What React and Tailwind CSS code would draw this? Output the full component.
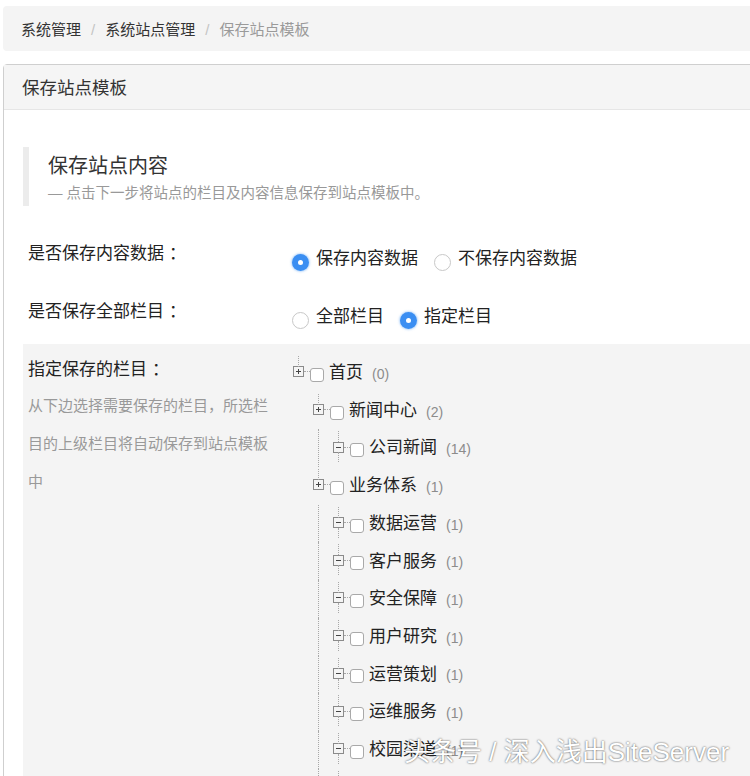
const FONT = "font-['Liberation_Sans','Noto_Sans_CJK_SC',sans-serif]";

const TREE = [
  { level: 0, name: "首页", count: 0, open: false },
  { level: 1, name: "新闻中心", count: 2, open: false },
  { level: 2, name: "公司新闻", count: 14, open: true },
  { level: 1, name: "业务体系", count: 1, open: false },
  { level: 2, name: "数据运营", count: 1, open: true },
  { level: 2, name: "客户服务", count: 1, open: true },
  { level: 2, name: "安全保障", count: 1, open: true },
  { level: 2, name: "用户研究", count: 1, open: true },
  { level: 2, name: "运营策划", count: 1, open: true },
  { level: 2, name: "运维服务", count: 1, open: true },
  { level: 2, name: "校园渠道", count: 1, open: true },
  { level: 2, name: "", count: null, open: true },
];

function Radio({ checked, label }) {
  return (
    <label className="flex items-center gap-[7px]">
      {checked ? (
        <span className="mt-[6px] flex h-[17px] w-[17px] items-center justify-center rounded-full bg-[#3a8ef2] shadow-[0_0_2px_1px_rgba(58,142,242,0.35)]">
          <span className="h-[5px] w-[5px] rounded-full bg-white" />
        </span>
      ) : (
        <span className="mt-[6px] h-[17px] w-[17px] rounded-full border border-[#c8c8c8] bg-white" />
      )}
      <span>{label}</span>
    </label>
  );
}

function ToggleIcon({ open }) {
  return (
    <span className="flex h-[11px] w-[11px] items-center justify-center border border-[#8a8a8a] bg-[#f4f4f4]">
      <span className="relative h-[1px] w-[5px] bg-[#444]">
        {!open && <span className="absolute left-[2px] top-[-2px] h-[5px] w-[1px] bg-[#444]" />}
      </span>
    </span>
  );
}

function TreeRow({ node }) {
  const guides = [];
  for (let i = 1; i < node.level; i++) {
    guides.push(
      <div key={i} className="flex h-full w-[20px] justify-start pl-[5px]">
        <div className="h-full border-l border-dotted border-[#a8a8a8]" />
      </div>
    );
  }
  return (
    <div className="flex h-[37.7px] items-center">
      {node.level > 0 && <div className="w-[20px]" />}
      {guides}
      <div className="relative flex h-full items-center">
        <div className="absolute left-[5px] top-[2px] h-[11px] border-l border-dotted border-[#a8a8a8]" />
        {node.open && (
          <div className="absolute left-[5px] top-[23px] h-[10px] border-l border-dotted border-[#a8a8a8]" />
        )}
        <span className="-mt-[2px]">
          <ToggleIcon open={node.open} />
        </span>
        <div className="-mt-[2px] w-[6px] border-t border-dotted border-[#a8a8a8]" />
        <span className="mt-[4px] h-[14px] w-[14px] rounded-[3px] border border-[#a9a9a9] bg-white" />
      </div>
      {node.name && (
        <>
          <span className="ml-[5px] text-[17px] text-[#222]">{node.name}</span>
          <span className="ml-[9px] mt-[3px] text-[14px] text-[#8c8c8c]">({node.count})</span>
        </>
      )}
    </div>
  );
}

export default function App() {
  return (
    <div className={`relative h-[776px] w-[750px] overflow-hidden bg-white ${FONT}`}>
      <div className="w-[770px] pl-[3px] pt-[6px]">
        {/* Breadcrumb */}
        <div className="flex h-[45px] items-center gap-[10px] rounded-[4px] bg-[#f4f4f4] pl-[18px] pt-[4px] text-[15px]">
          <span className="text-[#333]">系统管理</span>
          <span className="text-[#c4c4c4]">/</span>
          <span className="text-[#333]">系统站点管理</span>
          <span className="text-[#c4c4c4]">/</span>
          <span className="text-[#9a9a9a]">保存站点模板</span>
        </div>

        {/* Card */}
        <div className="mt-[13px] rounded-tl-[4px] border border-[#cfcfcf]">
          <div className="flex h-[45px] items-center border-b border-[#e6e6e6] bg-[#f5f5f5] pl-[18px] pt-[3px] text-[17.5px] text-[#333]">
            保存站点模板
          </div>

          <div className="pl-[19px] pt-[37px]">
            <div className="border-l-[6px] border-[#ececec] pb-[3px] pl-[19px] pt-[4px]">
              <h3 className="text-[20px] leading-[30px] text-[#333]">保存站点内容</h3>
              <p className="mt-[2px] text-[14.5px] leading-[20px] text-[#999]">
                — 点击下一步将站点的栏目及内容信息保存到站点模板中。
              </p>
            </div>

            <div className="mt-[33px] flex text-[17px] text-[#222]">
              <div className="w-[269px] pl-[5px] leading-[30px]">
                是否保存内容数据<span className="ml-[5px]">：</span>
              </div>
              <div className="flex gap-[16px] pt-[5px] leading-[30px]">
                <Radio checked label="保存内容数据" />
                <Radio label="不保存内容数据" />
              </div>
            </div>

            <div className="mt-[23px] flex text-[17px] text-[#222]">
              <div className="w-[269px] pl-[5px] leading-[30px]">
                是否保存全部栏目<span className="ml-[5px]">：</span>
              </div>
              <div className="flex gap-[16px] pt-[5px] leading-[30px]">
                <Radio label="全部栏目" />
                <Radio checked label="指定栏目" />
              </div>
            </div>

            <div className="mt-[12px] flex bg-[#f4f4f4] pt-[9px]">
              <div className="w-[270px] pl-[5px]">
                <div className="pt-[2px] text-[17px] leading-[30px] text-[#222]">
                  指定保存的栏目<span className="ml-[5px]">：</span>
                </div>
                <p className="mt-[2px] w-[245px] text-[15px] leading-[38px] text-[#999]">
                  从下边选择需要保存的栏目，所选栏目的上级栏目将自动保存到站点模板中
                </p>
              </div>
              <div className="pt-[1px]">
                {TREE.map((n, i) => (
                  <TreeRow key={i} node={n} />
                ))}
              </div>
            </div>
          </div>
        </div>
      </div>

      {/* Watermark */}
      <div className="absolute left-[404px] top-[735px] text-[26px] leading-[34px] text-white [text-shadow:0_0_2px_rgba(0,0,0,0.75)]">
        头条号 / 深入浅出SiteServer
      </div>
    </div>
  );
}
